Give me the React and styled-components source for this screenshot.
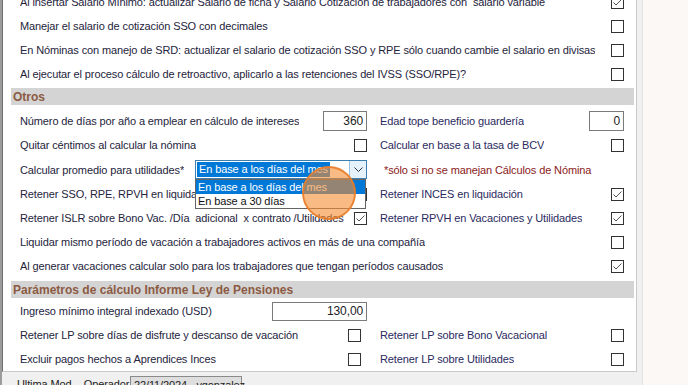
import React from "react";
import styled, { createGlobalStyle } from "styled-components";

const Global = createGlobalStyle`
  html, body { margin: 0; padding: 0; }
  body {
    font-family: "Liberation Sans", Arial, sans-serif;
    font-size: 11px;
    letter-spacing: -0.12px;
    color: #24243c;
    background: #fcf8f5;
  }
`;

const Viewport = styled.div`
  display: flex;
  width: 688px;
  height: 385px;
  overflow: hidden;
`;

const FormColumn = styled.div`
  box-sizing: border-box;
  width: 643px;
  flex: none;
  display: flex;
  flex-direction: column;
  background: #f0f0f0;
  border-left: 2px solid #9c9c9c;
  border-right: 1px solid #e2e2e2;
`;

const Side = styled.div`
  flex: 1;
  background: #fcf8f5;
`;

const Panel = styled.div`
  box-sizing: border-box;
  width: 635px;
  margin-top: -10px;
  padding: 0 2px 0 8px;
  background: #fff;
  border-left: 1px solid #6f6f6f;
  border-right: 1px solid #cacaca;
  border-bottom: 1px solid #cacaca;
`;

const SectionHeader = styled.div`
  height: 17px;
  margin: ${(p) => p.$mt}px 0 ${(p) => p.$mb}px;
  padding-left: 2px;
  display: flex;
  align-items: center;
  background: #d4d4d4;
  color: #8c5a43;
  font-weight: bold;
  font-size: 12px;
  letter-spacing: 0;
`;

const FullRow = styled.div`
  height: 24px;
  padding: 0 10px 0 9px;
  display: flex;
  align-items: center;
  justify-content: space-between;
`;

const SplitRow = styled.div`
  height: ${(p) => p.$h || 24}px;
  padding: 0 10px 0 9px;
  display: grid;
  grid-template-columns: 347px 1fr;
  column-gap: 13px;
  align-items: center;
`;

const Cell = styled.div`
  display: flex;
  align-items: center;
  justify-content: space-between;
  padding-right: ${(p) => p.$inset || 0}px;
  color: ${(p) => (p.$right ? "#2a2a60" : "#24243c")};
  white-space: nowrap;
  min-width: 0;
`;

const Label = styled.span`
  white-space: pre;
  overflow: hidden;
`;

const Note = styled.span`
  color: #8a2020;
  padding-left: 4px;
`;

const Box = styled.span`
  box-sizing: border-box;
  width: 13px;
  height: 13px;
  flex: none;
  border: 1px solid #333;
  background: #fff;
  display: inline-flex;
`;

const NumInput = styled.div`
  box-sizing: border-box;
  width: ${(p) => p.$w}px;
  height: ${(p) => p.$h || 20}px;
  flex: none;
  border: 1px solid #7a7a7a;
  background: #fff;
  display: flex;
  align-items: center;
  justify-content: flex-end;
  padding-right: 3px;
  font-size: 12px;
  color: #222;
`;

const SelectWrap = styled.div`
  position: relative;
  flex: none;
  width: 172px;
  height: 19px;
`;

const SelectBox = styled.div`
  box-sizing: border-box;
  height: 19px;
  border: 1px solid #3c7fb1;
  background: #fff;
  display: flex;
  align-items: center;
  padding-left: 1px;
`;

const Selected = styled.span`
  background: #0078d7;
  color: #fff;
  padding: 1px 2px;
  line-height: 13px;
`;

const Arrow = styled.span`
  margin-left: auto;
  width: 16px;
  height: 17px;
  border-left: 1px solid #9cc3e4;
  background: #e5f1fb;
  display: flex;
  align-items: center;
  justify-content: center;
`;

const DropList = styled.div`
  position: absolute;
  left: 0;
  top: 100%;
  width: 171px;
  box-sizing: border-box;
  border: 1px solid #646464;
  background: #fff;
  z-index: 2;
`;

const DropItem = styled.div`
  height: 14px;
  line-height: 14px;
  padding-left: 2px;
  background: ${(p) => (p.$active ? "#0078d7" : "#fff")};
  color: ${(p) => (p.$active ? "#fff" : "#111")};
`;

const CursorHalo = styled.div`
  position: absolute;
  left: 107px;
  top: 6px;
  width: 54px;
  height: 54px;
  box-sizing: border-box;
  border-radius: 50%;
  border: 2px solid rgba(232, 125, 40, 0.85);
  background: rgba(245, 140, 50, 0.6);
  z-index: 3;
  pointer-events: none;
`;

const Footer = styled.div`
  display: flex;
  align-items: flex-start;
  padding: 4px 0 0 15px;
  color: #222;
`;

const FooterLabel = styled.span`
  width: 113px;
  padding-top: 2px;
  white-space: pre;
`;

const FooterField = styled.div`
  box-sizing: border-box;
  width: 112px;
  height: 18px;
  border: 1px solid #8a8a8a;
  background: #dedede;
  padding: 2px 3px;
  white-space: pre;
`;

function Check({ on }) {
  return (
    <Box>
      {on && (
        <svg width="11" height="11" viewBox="0 0 11 11">
          <polyline points="1.5,5.5 4,8 9.5,2.5" fill="none" stroke="#555" strokeWidth="1" />
        </svg>
      )}
    </Box>
  );
}

function Full({ label, on }) {
  return (
    <FullRow>
      <Label>{label}</Label>
      <Check on={on} />
    </FullRow>
  );
}

function Split({ left, right, inset }) {
  return (
    <SplitRow>
      <Cell $inset={inset}>{left}</Cell>
      <Cell $right>{right}</Cell>
    </SplitRow>
  );
}

export default function App() {
  return (
    <>
      <Global />
      <Viewport>
        <FormColumn>
          <Panel>
            <Full
              on
              label="Al insertar Salario Mínimo: actualizar Salario de ficha y Salario Cotización de trabajadores con  salario variable"
            />
            <Full label="Manejar el salario de cotización SSO con decimales" />
            <Full label="En Nóminas con manejo de SRD: actualizar el salario de cotización SSO y RPE sólo cuando cambie el salario en divisas" />
            <Full label="Al ejecutar el proceso cálculo de retroactivo, aplicarlo a las retenciones del IVSS (SSO/RPE)?" />

            <SectionHeader $mt={2} $mb={4}>Otros</SectionHeader>

            <Split
              left={<><Label>Número de días por año a emplear en cálculo de intereses</Label><NumInput $w={44}>360</NumInput></>}
              right={<><Label>Edad tope beneficio guardería</Label><NumInput $w={35}>0</NumInput></>}
            />
            <Split
              left={<><Label>Quitar céntimos al calcular la nómina</Label><Check /></>}
              right={<><Label>Calcular en base a la tasa de BCV</Label><Check /></>}
            />
            <SplitRow $h={25}>
              <Cell>
                <Label>Calcular promedio para utilidades*</Label>
                <SelectWrap>
                  <SelectBox>
                    <Selected>En base a los días del mes</Selected>
                    <Arrow>
                      <svg width="9" height="6" viewBox="0 0 9 6">
                        <polyline points="0.5,0.5 4.5,4.5 8.5,0.5" fill="none" stroke="#333" strokeWidth="1" />
                      </svg>
                    </Arrow>
                  </SelectBox>
                  <DropList>
                    <DropItem $active>En base a los días del mes</DropItem>
                    <DropItem>En base a 30 días</DropItem>
                  </DropList>
                  <CursorHalo />
                </SelectWrap>
              </Cell>
              <Cell $right>
                <Note>*sólo si no se manejan Cálculos de Nómina</Note>
              </Cell>
            </SplitRow>
            <Split
              left={<><Label>Retener SSO, RPE, RPVH en liquidación</Label><Check on /></>}
              right={<><Label>Retener INCES en liquidación</Label><Check on /></>}
            />
            <Split
              left={<><Label>Retener ISLR sobre Bono Vac. /Día  adicional  x contrato /Utilidades</Label><Check on /></>}
              right={<><Label>Retener RPVH en Vacaciones y Utilidades</Label><Check on /></>}
            />
            <Full label="Liquidar mismo período de vacación a trabajadores activos en más de una compañía" />
            <Full on label="Al generar vacaciones calcular solo para los trabajadores que tengan períodos causados" />

            <SectionHeader $mt={3} $mb={1}>Parámetros de cálculo Informe Ley de Pensiones</SectionHeader>

            <Split
              left={<><Label>Ingreso mínimo integral indexado (USD)</Label><NumInput $w={95} $h={19}>130,00</NumInput></>}
              right={null}
            />
            <Split
              inset={6}
              left={<><Label>Retener LP sobre días de disfrute y descanso de vacación</Label><Check /></>}
              right={<><Label>Retener LP sobre Bono Vacacional</Label><Check /></>}
            />
            <Split
              inset={6}
              left={<><Label>Excluir pagos hechos a Aprendices Inces</Label><Check /></>}
              right={<><Label>Retener LP sobre Utilidades</Label><Check /></>}
            />
          </Panel>
          <Footer>
            <FooterLabel>Ultima Mod. - Operador</FooterLabel>
            <FooterField>22/11/2024 - ygonzalez</FooterField>
          </Footer>
        </FormColumn>
        <Side />
      </Viewport>
    </>
  );
}
